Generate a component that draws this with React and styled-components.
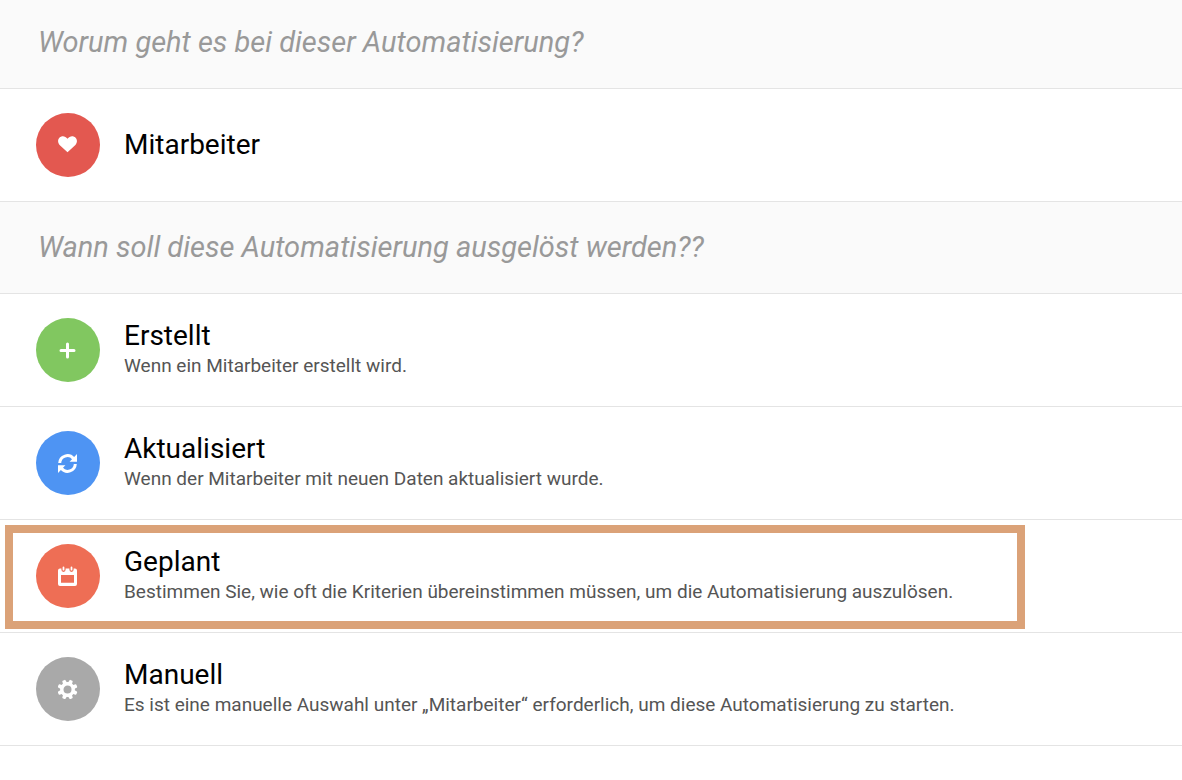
import styled, { createGlobalStyle } from "styled-components";

const colors = {
  line: "#e4e4e4",
  headingBg: "#fafafa",
  headingText: "#999999",
  title: "#000000",
  description: "#555555",
  highlight: "#dba278",
};

const GlobalStyle = createGlobalStyle`
  * {
    box-sizing: border-box;
  }

  body {
    margin: 0;
    background-color: #ffffff;
    font-family: Roboto, "Liberation Sans", sans-serif;
  }
`;

const Heading = styled.h2`
  margin: 0;
  padding: ${({ $first }) => ($first ? "24px 38px 28px" : "27px 38px 28px")};
  border-bottom: 1px solid ${colors.line};
  background-color: ${colors.headingBg};
  color: ${colors.headingText};
  font-size: 29px;
  line-height: 36px;
  font-style: italic;
  font-weight: 400;
`;

const OptionList = styled.ul`
  list-style-type: none;
  margin: 0;
  padding: 0;
`;

const OptionItem = styled.li`
  position: relative;
  border-bottom: 1px solid ${colors.line};
`;

const OptionButton = styled.button`
  display: flex;
  align-items: center;
  gap: 24px;
  width: 100%;
  padding: 24px 36px;
  border: none;
  background-color: transparent;
  font-family: inherit;
  text-align: left;
  cursor: pointer;
`;

const IconCircle = styled.span`
  display: flex;
  align-items: center;
  justify-content: center;
  flex-shrink: 0;
  width: 64px;
  height: 64px;
  border-radius: 50%;
  background-color: ${({ $color }) => $color};
  color: #ffffff;
`;

const OptionText = styled.span`
  display: flex;
  flex-direction: column;
`;

const OptionTitle = styled.span`
  color: ${colors.title};
  font-size: 28px;
  line-height: 36px;
`;

const OptionDescription = styled.span`
  padding-bottom: 4px;
  color: ${colors.description};
  font-size: 19px;
  line-height: 24px;
`;

const Highlight = styled.span`
  position: absolute;
  top: 5px;
  bottom: 3px;
  left: 5px;
  width: min(1020px, calc(100% - 10px));
  border: 8px solid ${colors.highlight};
  pointer-events: none;
`;

const Icon = ({ children }) => (
  <svg width="20" height="20" viewBox="0 0 20 20" fill="currentColor" aria-hidden="true">
    {children}
  </svg>
);

const HeartIcon = () => (
  <Icon>
    <path d="M9.5 17.3 1.6 9.9C-.4 7.8-.4 4.6 1.4 2.7 3.5.5 7.3.6 9.5 3.8 11.7.6 15.5.5 17.6 2.7 19.4 4.6 19.4 7.8 17.4 9.9Z" />
  </Icon>
);

const PlusIcon = () => (
  <Icon>
    <path
      d="M9.5 4V17M3 10.5H16"
      fill="none"
      stroke="currentColor"
      strokeWidth="3"
      strokeLinecap="round"
    />
  </Icon>
);

const RefreshIcon = () => (
  <Icon>
    <path
      d="M1.7 10A7.8 7.8 0 0 1 15.4 5.4M17.3 11A7.8 7.8 0 0 1 3.6 15.6"
      fill="none"
      stroke="currentColor"
      strokeWidth="3"
    />
    <path d="M19 1V8.7H11.6L14.2 6ZM0 20V12.300H7.400L4.800 15Z" />
  </Icon>
);

const CalendarIcon = () => (
  <Icon>
    <path
      fillRule="evenodd"
      d="M2 2.5h1.4v1.3a2.1 2.1 0 0 0 4.2 0V2.5h3.8v1.3a2.1 2.1 0 0 0 4.2 0V2.5H17a2 2 0 0 1 2 2V18a2 2 0 0 1-2 2H2a2 2 0 0 1-2-2V4.5a2 2 0 0 1 2-2ZM3 9v7.8h13V9Z"
    />
    <path
      d="M5.5 1.5v2.2M13.5 1.5v2.2"
      fill="none"
      stroke="currentColor"
      strokeWidth="1.8"
      strokeLinecap="round"
    />
  </Icon>
);

const toothAngles = [22.5, 67.5, 112.5, 157.5, 202.5, 247.5, 292.5, 337.5];

const GearIcon = () => (
  <Icon>
    <circle cx="9.5" cy="10.5" r="5.7" fill="none" stroke="currentColor" strokeWidth="3.4" />
    {toothAngles.map((angle) => (
      <path
        key={angle}
        d="M7.3 4.5 7.8 1.1Q7.9.5 8.5.5H10.5Q11.1.5 11.2 1.1L11.7 4.5Z"
        transform={`rotate(${angle} 9.5 10.5)`}
      />
    ))}
  </Icon>
);

const subjects = [{ title: "Mitarbeiter", color: "#e35850", icon: HeartIcon }];

const triggers = [
  {
    title: "Erstellt",
    description: "Wenn ein Mitarbeiter erstellt wird.",
    color: "#81c760",
    icon: PlusIcon,
  },
  {
    title: "Aktualisiert",
    description: "Wenn der Mitarbeiter mit neuen Daten aktualisiert wurde.",
    color: "#4e94f3",
    icon: RefreshIcon,
  },
  {
    title: "Geplant",
    description:
      "Bestimmen Sie, wie oft die Kriterien übereinstimmen müssen, um die Automatisierung auszulösen.",
    color: "#ee6e55",
    icon: CalendarIcon,
    highlighted: true,
  },
  {
    title: "Manuell",
    description:
      "Es ist eine manuelle Auswahl unter „Mitarbeiter“ erforderlich, um diese Automatisierung zu starten.",
    color: "#a9a9a9",
    icon: GearIcon,
  },
];

const Options = ({ options }) => (
  <OptionList>
    {options.map(({ title, description, color, icon: OptionIcon, highlighted }) => (
      <OptionItem key={title}>
        <OptionButton type="button">
          <IconCircle $color={color}>
            <OptionIcon />
          </IconCircle>
          <OptionText>
            <OptionTitle>{title}</OptionTitle>
            {description && <OptionDescription>{description}</OptionDescription>}
          </OptionText>
        </OptionButton>
        {highlighted && <Highlight />}
      </OptionItem>
    ))}
  </OptionList>
);

const App = () => {
  return (
    <>
      <GlobalStyle />
      <main>
        <Heading $first>Worum geht es bei dieser Automatisierung?</Heading>
        <Options options={subjects} />
        <Heading>Wann soll diese Automatisierung ausgelöst werden??</Heading>
        <Options options={triggers} />
      </main>
    </>
  );
};

export default App;
